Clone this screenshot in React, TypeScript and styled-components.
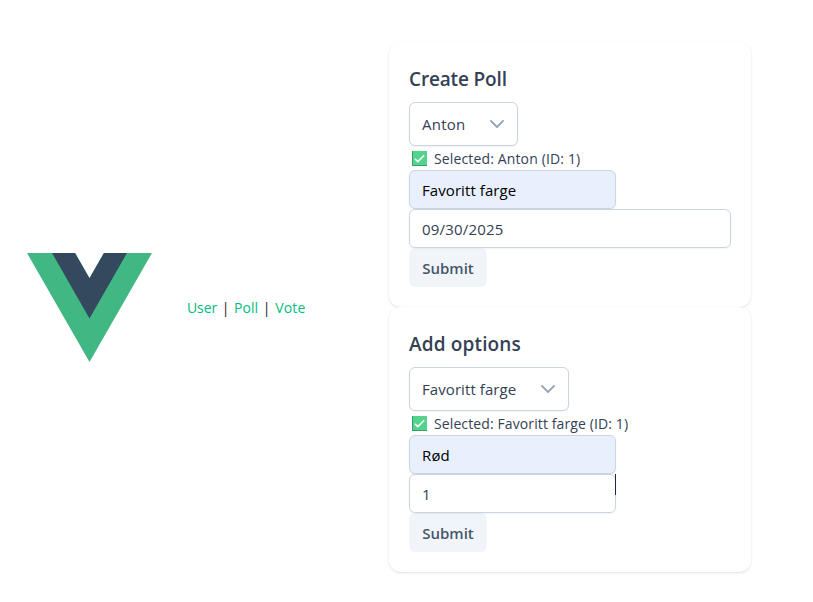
import React from "react";
import styled, { createGlobalStyle } from "styled-components";

const GlobalStyle = createGlobalStyle`
  *, *::before, *::after { box-sizing: border-box; }
  body {
    margin: 0;
    background: #fff;
    color: #2c3e50;
    font-family: "Segoe UI", "Open Sans", "Noto Sans", sans-serif;
    font-size: 14px;
  }
`;

const Page = styled.div`
  display: grid;
  grid-template-columns: 389px 362px;
  height: 602px;
  padding-top: 42px;
  overflow: hidden;
`;

const Header = styled.header`
  display: flex;
  align-items: center;
  height: 530px;
  padding-left: 27px;
`;

const Logo = styled.svg`
  display: block;
  width: 125px;
  height: 109px;
  margin-right: 35px;
`;

const Nav = styled.nav`
  display: flex;
  gap: 6px;
  padding-top: 2px;
  line-height: 24px;
`;

const NavLink = styled.a<{ $tracking: number }>`
  color: #00bd7e;
  text-decoration: none;
  letter-spacing: ${(p) => p.$tracking}px;
`;

const Divider = styled.span`
  display: flex;
  justify-content: center;
  width: 5px;
  color: #181818;
`;

const Main = styled.main`
  display: flex;
  flex-direction: column;
`;

const Card = styled.form`
  display: flex;
  flex-direction: column;
  align-items: flex-start;
  height: 265px;
  padding: 20px;
  border-radius: 12px;
  background: #fff;
  color: #334155;
  box-shadow: 0 1px 3px rgba(0, 0, 0, 0.1), 0 1px 2px -1px rgba(0, 0, 0, 0.1);
`;

const Title = styled.h2<{ $tracking: number }>`
  height: 32px;
  margin: 0 0 8px;
  font-size: 19px;
  font-weight: 600;
  line-height: 34px;
  letter-spacing: ${(p) => p.$tracking}px;
`;

const Select = styled.div<{ $width: number }>`
  display: flex;
  align-items: center;
  justify-content: space-between;
  flex: none;
  width: ${(p) => p.$width}px;
  height: 44px;
  padding: 0 12px;
  border: 1px solid #cbd5e1;
  border-radius: 6px;
  background: #fff;
  font-size: 15px;
  box-shadow: 0 1px 2px rgba(18, 18, 23, 0.05);
`;

const Chevron = styled.svg`
  width: 16px;
  height: 16px;
`;

const Selected = styled.div`
  display: flex;
  align-items: center;
  flex: none;
  height: 24px;
  padding-left: 3px;
  gap: 7px;
  white-space: nowrap;
`;

const CheckBadge = styled.svg`
  width: 15px;
  height: 15px;
`;

const Label = styled.span<{ $tracking: number }>`
  letter-spacing: ${(p) => p.$tracking}px;
`;

const FieldWrap = styled.div<{ $full?: boolean }>`
  position: relative;
  flex: none;
  width: ${(p) => (p.$full ? "100%" : "207px")};
  height: 39px;
`;

const Field = styled.input<{ $filled?: boolean; $tracking: number }>`
  display: block;
  width: 100%;
  height: 39px;
  padding: 0 12px;
  border: 1px solid #cbd5e1;
  border-radius: 6px;
  outline: none;
  background: ${(p) => (p.$filled ? "#e8f0fe" : "#fff")};
  color: ${(p) => (p.$filled ? "#000" : "#334155")};
  font-family: inherit;
  font-size: 15px;
  letter-spacing: ${(p) => p.$tracking}px;
  box-shadow: 0 1px 2px rgba(18, 18, 23, 0.05);
`;

const Caret = styled.span`
  position: absolute;
  top: 0;
  right: 0;
  width: 1px;
  height: 21px;
  background: #1e293b;
`;

const Submit = styled.button`
  flex: none;
  width: 78px;
  height: 39px;
  padding: 0;
  border: 0;
  border-radius: 6px;
  background: #f1f5f9;
  color: #475569;
  font-family: inherit;
  font-size: 15px;
  font-weight: 600;
`;

const DownIcon = () => (
  <Chevron viewBox="0 0 16 16" fill="none" stroke="#94a3b8" strokeWidth="1.8" strokeLinecap="round" strokeLinejoin="round">
    <path d="M1.9 4.9 8 11l6.1-6.1" />
  </Chevron>
);

const CheckIcon = () => (
  <CheckBadge viewBox="0 0 15 15">
    <rect width="15" height="15" fill="#35a06b" />
    <rect x="1" width="14" height="14" fill="#53d48d" />
    <path d="M2.8 7.8 5.8 10.6 12.2 4.3" fill="none" stroke="#fff" strokeWidth="1.5" />
  </CheckBadge>
);

export default function App() {
  return (
    <>
      <GlobalStyle />
      <Page>
        <Header>
          <Logo viewBox="0 0 261.76 226.69" preserveAspectRatio="none">
            <path fill="#41b883" d="M161.096 0l-30.225 52.352L100.647 0H0l130.872 226.689L261.749 0z" />
            <path fill="#34495e" d="M161.096 0l-30.225 52.352L100.647 0H52.346l78.526 136.01L209.398 0z" />
          </Logo>
          <Nav>
            <NavLink $tracking={-0.1}>User</NavLink>
            <Divider>|</Divider>
            <NavLink $tracking={0.05}>Poll</NavLink>
            <Divider>|</Divider>
            <NavLink $tracking={0.2}>Vote</NavLink>
          </Nav>
        </Header>
        <Main>
          <Card>
            <Title $tracking={-0.15}>Create Poll</Title>
            <Select $width={109}>
              <Label $tracking={0.25}>Anton</Label>
              <DownIcon />
            </Select>
            <Selected>
              <CheckIcon />
              <Label $tracking={0.14}>Selected: Anton (ID: 1)</Label>
            </Selected>
            <FieldWrap>
              <Field $filled $tracking={0.08} defaultValue="Favoritt farge" />
            </FieldWrap>
            <FieldWrap $full>
              <Field $tracking={0.2} defaultValue="09/30/2025" />
            </FieldWrap>
            <Submit type="button">Submit</Submit>
          </Card>
          <Card>
            <Title $tracking={0.15}>Add options</Title>
            <Select $width={160}>
              <Label $tracking={0.08}>Favoritt farge</Label>
              <DownIcon />
            </Select>
            <Selected>
              <CheckIcon />
              <Label $tracking={0.11}>Selected: Favoritt farge (ID: 1)</Label>
            </Selected>
            <FieldWrap>
              <Field $filled $tracking={0.15} defaultValue="Rød" />
            </FieldWrap>
            <FieldWrap>
              <Field $tracking={0} defaultValue="1" />
              <Caret />
            </FieldWrap>
            <Submit type="button">Submit</Submit>
          </Card>
        </Main>
      </Page>
    </>
  );
}
